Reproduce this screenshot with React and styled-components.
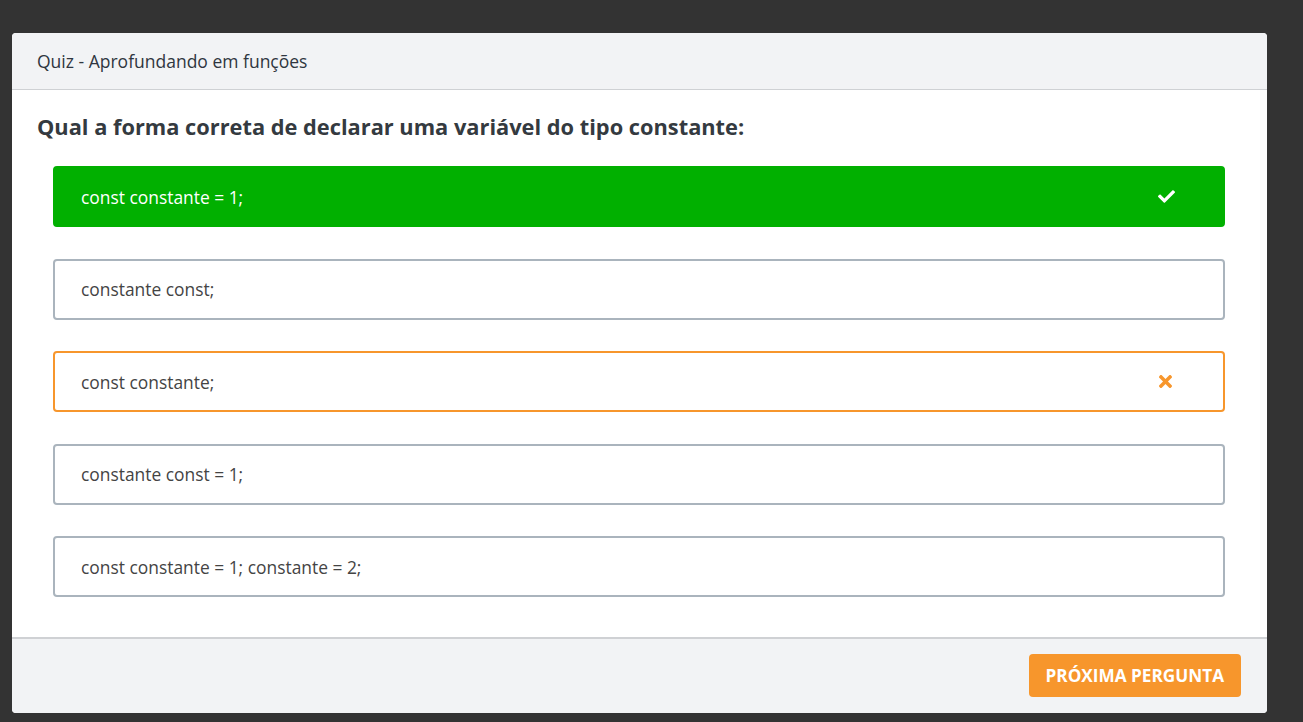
import React from 'react'
import styled, { createGlobalStyle } from 'styled-components'
import { FaCheck, FaTimes } from 'react-icons/fa'

const GlobalStyle = createGlobalStyle`
    body {
        margin: 0;
        background: #333333;
        font-family: "Open Sans", "Liberation Sans", sans-serif;
    }
`

const options = [
    { text: 'const constante = 1;', state: 'correct' },
    { text: 'constante const;', state: 'idle' },
    { text: 'const constante;', state: 'wrong' },
    { text: 'constante const = 1;', state: 'idle' },
    { text: 'const constante = 1; constante = 2;', state: 'idle' },
]

const App = () => {
    return (
        <Page>
            <GlobalStyle />
            <Modal>
                <Header>Quiz - Aprofundando em funções</Header>
                <Body>
                    <Question>Qual a forma correta de declarar uma variável do tipo constante:</Question>
                    <Options>
                        {options.map((o) => (
                            <Option key={o.text} state={o.state}>
                                <span>{o.text}</span>
                                {o.state === 'correct' && <FaCheck size={17} />}
                                {o.state === 'wrong' && <FaTimes size={19} />}
                            </Option>
                        ))}
                    </Options>
                </Body>
                <Footer>
                    <NextButton>PRÓXIMA PERGUNTA</NextButton>
                </Footer>
            </Modal>
        </Page>
    )
}

export default App

const Page = styled.div`
    min-height: 722px;
    padding: 33px 36px 9px 12px;
    box-sizing: border-box;
`

const Modal = styled.div`
    background: #ffffff;
    border-radius: 4px;
    overflow: hidden;
`

const Header = styled.div`
    height: 56px;
    display: flex;
    align-items: center;
    padding: 0 25px;
    background: #f2f3f5;
    border-bottom: 1px solid #cfd1d4;
    font-size: 17.5px;
    color: #2f3640;
`

const Body = styled.div`
    padding: 23px 25px 8px 25px;
`

const Question = styled.h2`
    margin: 0 0 25px 0;
    font-size: 21.8px;
    line-height: 28px;
    font-weight: 700;
    color: #343a40;
`

const Options = styled.div`
    padding: 0 17px 0 16px;
`

const stateStyles = {
    correct: 'background: #01b000; border-color: #01b000; color: #ffffff;',
    wrong: 'background: #ffffff; border-color: #f7962c; color: #444444;',
    idle: 'background: #ffffff; border-color: #aab4bd; color: #444444;',
}

const Option = styled.div`
    height: 61px;
    box-sizing: border-box;
    margin-bottom: 31.5px;
    border: 2px solid;
    border-radius: 4px;
    display: flex;
    align-items: center;
    justify-content: space-between;
    padding: 0 48px 0 26px;
    font-size: 17.4px;
    ${(p) => stateStyles[p.state]}
    svg {
        color: ${(p) => (p.state === 'wrong' ? '#f7962c' : '#ffffff')};
    }
`

const Footer = styled.div`
    height: 76px;
    box-sizing: border-box;
    background: #f2f3f5;
    border-top: 2px solid #cfd1d4;
    display: flex;
    align-items: center;
    justify-content: flex-end;
    padding: 0 26px;
`

const NextButton = styled.button`
    height: 43px;
    padding: 0 17px;
    border: none;
    border-radius: 4px;
    background: #f7962c;
    color: #ffffff;
    font-family: "Open Sans", "Liberation Sans", sans-serif;
    font-size: 17.2px;
    font-weight: 700;
    cursor: pointer;
`
